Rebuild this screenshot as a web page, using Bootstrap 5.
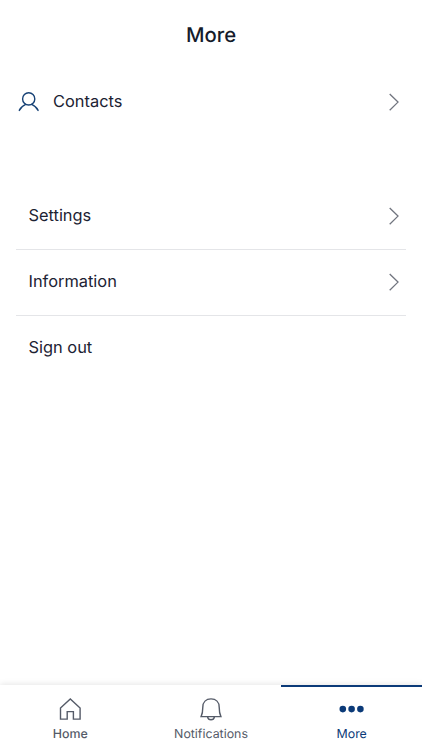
<!DOCTYPE html>
<html lang="en">
<head>
<meta charset="utf-8">
<meta name="viewport" content="width=device-width, initial-scale=1">
<title>More</title>
<link rel="stylesheet" href="https://cdn.jsdelivr.net/npm/bootstrap@5.3.0/dist/css/bootstrap.min.css">
<style>
body { font-family: Inter, sans-serif; color: #1c2233; background: #fff; text-rendering: geometricPrecision; }
svg { display: block; fill: none; flex-shrink: 0; }
.page-title { height: 69px; padding-top: 2px; font-size: 20.3px; font-weight: 500; color: #151b2b; }
.menu-row { height: 66px; font-size: 16.4px; line-height: 24px; color: #1c2233; }
.menu-row:hover { color: #1c2233; }
.menu-row span { padding-bottom: 2px; }
.contact-row { padding: 0 16px 0 17px; }
.contact-row span { padding-left: 12px; }
.menu-group { margin: 48px 16px 0; }
.menu-group .menu-row { padding-left: 12.5px; }
.menu-group .menu-row + .menu-row { border-top: 1px solid #e4e5e8; }
.menu-group .menu-row + .menu-row > * { margin-bottom: 1px; }
.chevron { stroke: #71757f; stroke-width: 1.3; }
.tab-bar { height: 65px; box-shadow: 0 -1px 6px rgba(0,0,0,.1); background: #fff; }
.tab-item { padding-top: 10px; color: #555b68; font-size: 12.4px; line-height: 16px; border-top: 2px solid transparent; }
.tab-item svg { margin-bottom: 5px; stroke: #555b68; stroke-width: 1.4; }
.tab-item.current { color: #0b3a78; border-color: #0b3a78; }
.tab-item.current svg { fill: #0b3a78; stroke: none; }
</style>
<script src="https://cdn.jsdelivr.net/npm/bootstrap@5.3.0/dist/js/bootstrap.bundle.min.js"></script>
</head>
<body>
<div class="d-flex flex-column vh-100 overflow-hidden">
  <h1 class="page-title d-flex align-items-center justify-content-center m-0">More</h1>
  <main class="flex-grow-1">
    <a href="#" class="menu-row contact-row d-flex align-items-center text-decoration-none">
      <svg width="24" height="24" stroke="#174276" stroke-width="1.4" stroke-linecap="round"><circle cx="11.7" cy="8.9" r="6.1"/><path d="M2.3 20.4C3.5 17.8 5.7 15.7 8.7 14.4M14.7 14.4c3 1.3 5.2 3.4 6.4 6"/></svg>
      <span>Contacts</span>
      <svg class="chevron ms-auto" width="24" height="24"><path d="M7.7 4l8.3 8.1-8.3 8.1"/></svg>
    </a>
    <nav class="menu-group">
      <a href="#" class="menu-row d-flex align-items-center text-decoration-none"><span>Settings</span><svg class="chevron ms-auto" width="24" height="24"><path d="M7.7 4l8.3 8.1-8.3 8.1"/></svg></a>
      <a href="#" class="menu-row d-flex align-items-center text-decoration-none"><span>Information</span><svg class="chevron ms-auto" width="24" height="24"><path d="M7.7 4l8.3 8.1-8.3 8.1"/></svg></a>
      <a href="#" class="menu-row d-flex align-items-center text-decoration-none"><span>Sign out</span></a>
    </nav>
  </main>
  <nav class="tab-bar row g-0 flex-shrink-0">
    <a href="#" class="tab-item fw-medium col d-flex flex-column align-items-center text-decoration-none">
      <svg width="24" height="24"><path d="M2.5 11.1L12.3 2l9.8 9.1v11h-6.7v-7.5H9.2v7.5H2.5z"/></svg>Home</a>
    <a href="#" class="tab-item col d-flex flex-column align-items-center text-decoration-none">
      <svg width="24" height="24"><path d="M2.1 19.6C3.3 17 3.8 14.6 3.8 10.2 3.8 5.2 7 1.9 12 1.9s8.2 3.3 8.2 8.3c0 4.4.5 6.8 1.7 9.4zM8.5 19.8c.4 1.9 1.6 3 3.5 3s3.1-1.1 3.5-3"/></svg>Notifications</a>
    <a href="#" class="tab-item current col d-flex flex-column align-items-center text-decoration-none" aria-current="page">
      <svg width="26" height="24"><circle cx="3.8" cy="12.1" r="3.3"/><circle cx="12.6" cy="12.1" r="3.3"/><circle cx="21.4" cy="12.1" r="3.3"/></svg>More</a>
  </nav>
</div>
</body>
</html>
